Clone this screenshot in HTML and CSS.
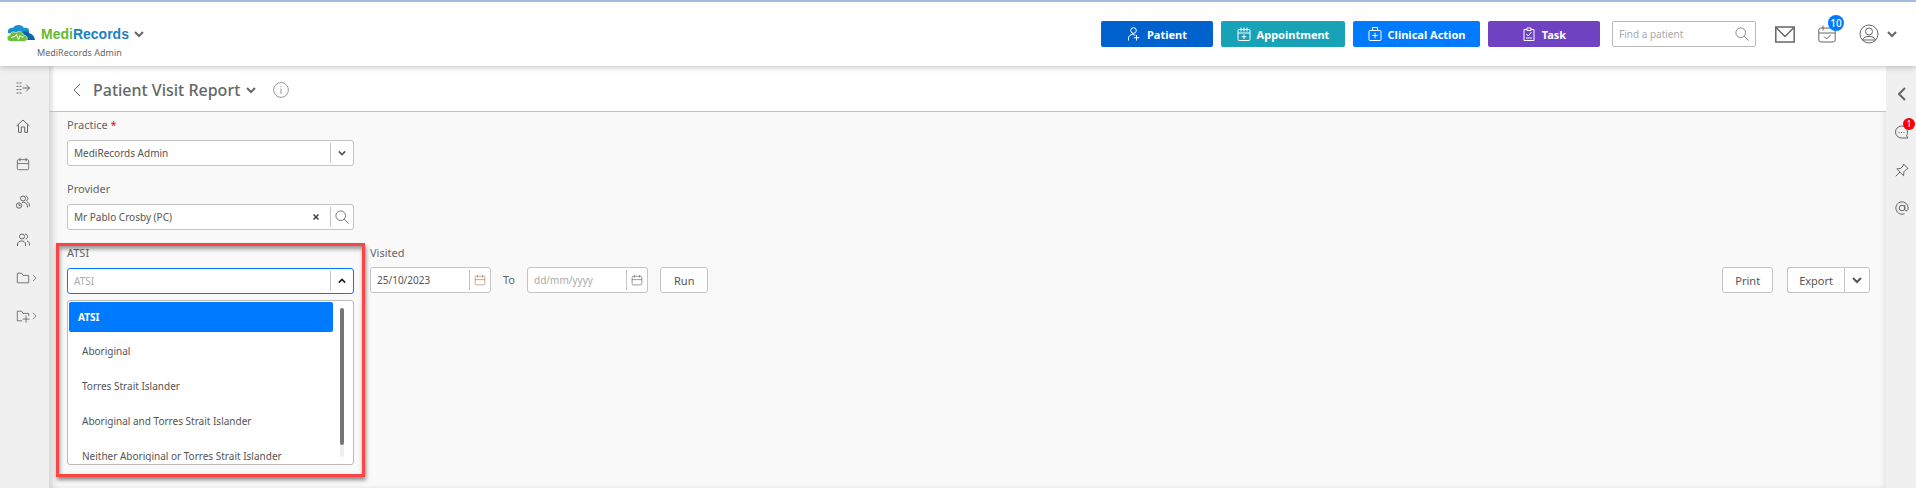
FILE: index.html
```html
<!DOCTYPE html>
<html lang="en">
<head>
<meta charset="utf-8">
<title>Patient Visit Report</title>
<link rel="stylesheet" href="styles.css">
</head>
<body>
<svg class="sprite" aria-hidden="true">
  <symbol id="chev" viewBox="0 0 10 10"><path d="M1 3l4 4 4-4"/></symbol>
  <symbol id="cal" viewBox="0 0 16 16"><rect x="1.500" y="3" width="13" height="11.500" rx="1.500"/><path d="M1.500 7.500h13M4.500 1v4M11.500 1v4"/></symbol>
  <symbol id="glass" viewBox="0 0 16 16"><circle cx="6.500" cy="6.500" r="5.500"/><path d="M10.500 10.500l5 5"/></symbol>
  <symbol id="folder" viewBox="0 0 16 16"><path d="M1.500 13.500v-11h5l1.500 2.500h6.500v8.500z"/></symbol>
</svg>
<header class="top">
  <div class="brand">
    <div class="brand-row">
      <svg class="cloud" viewBox="0 0 28 18" aria-hidden="true">
        <path fill="#1690cf" d="M1 8C0 4 4 2 6 3c2-4 9-4 11 0 4-1 6 2 5 5 4 1 5 5 4 7-7 1-16-5-25-7z"/>
        <path fill="#0b66a8" d="M14 8c3-3 7-2 9 1 3 0 5 4 5 6H17z"/>
        <path fill="#6fbe3c" stroke="#fff" stroke-width=".6" d="M4 16.500c-5 0-5-6-1-6.500 0-3 4-4 6-2 3-3 7-1 7.500 2 5 .5 5 6.500.5 6.500z"/>
        <path fill="none" stroke="#fff" d="M4 12.500l4-1 1.500-2 2 5 1.500-4 1.500 1.500h2"/>
      </svg>
      <span class="wordmark"><span class="green">Medi</span>Records</span>
      <button class="bare" aria-label="Switch practice"><svg class="i10"><use href="#chev"/></svg></button>
    </div>
    <div class="brand-sub">MediRecords Admin</div>
  </div>
  <nav class="actions">
    <button class="act patient"><svg viewBox="0 0 14 14"><circle cx="6.500" cy="3.500" r="2.800"/><path d="M1.500 13.500V11c0-2 2-3.500 4-3.500M5 6.500c1.500 1.500 2.500 1.500 3.500 1.500M9.500 8v5.500M6.800 10.700h5.500"/></svg>Patient</button>
    <button class="act appt"><svg viewBox="0 0 14 14"><rect x="1" y="2.500" width="12" height="11" rx="1"/><path d="M1 6h12M4 .5v4M10 .5v4M7 .5v4M7 7.500v4.500M4.800 9.700h4.500"/></svg>Appointment</button>
    <button class="act clin"><svg viewBox="0 0 14 14"><rect x="1" y="3.500" width="12" height="10" rx="1"/><path d="M4.500 3.500v-3h5v3M7 5.800v5.400M4.300 8.500h5.400"/></svg>Clinical Action</button>
    <button class="act task"><svg viewBox="0 0 14 14"><path d="M5 2.500H2v11h10v-11H9M5 1h4v2.500H5zM4.500 7l1.800 2 3.200-4M4 11h6"/></svg>Task</button>
    <div class="find">
      <input type="text" aria-label="Find a patient" placeholder="Find a patient">
      <svg class="i14"><use href="#glass"/></svg>
    </div>
    <button class="bare mail" aria-label="Messages"><svg viewBox="0 0 20 17"><rect x=".8" y="1" width="18.400" height="15"/><path d="M1 1.500l9 9 9-9"/></svg></button>
    <button class="bare diary" aria-label="Reminders"><svg viewBox="0 0 18 18"><rect x=".8" y="3" width="16.400" height="14" rx="2"/><path d="M1 8h16M5 .5v5M6 11.500l2.500 2.500 4-4"/></svg><span class="badge">10</span></button>
    <button class="bare user" aria-label="Account"><svg class="face" viewBox="0 0 20 20"><circle cx="10" cy="10" r="9"/><circle cx="10" cy="7.500" r="3.500"/><path d="M3.500 16c1-3 3.500-3.500 6.500-3.500s5.500.5 6.500 3.500z"/></svg><svg class="i10"><use href="#chev"/></svg></button>
  </nav>
</header>
<div class="shell">
  <nav class="rail" aria-label="Main">
    <button class="bare" aria-label="Expand menu"><svg class="i14" viewBox="0 0 14 14"><path stroke-dasharray="2 1" d="M.5 2h5M.5 5.300h5M.5 8.600h5M.5 12h5"/><path d="M6.500 7h7M10 3.500L13.500 7 10 10.500"/></svg></button>
    <button class="bare" aria-label="Home"><svg class="i14" viewBox="0 0 14 14"><path d="M.5 7L7 1l6.500 6M2.500 5.500v7.800h2.800V8h3.400v5.300h2.800V5.500"/></svg></button>
    <button class="bare" aria-label="Calendar"><svg class="i14"><use href="#cal"/></svg></button>
    <button class="bare" aria-label="Waiting room"><svg class="i14" viewBox="0 0 14 14"><circle cx="7" cy="3.500" r="2.500"/><path d="M9.500 1c3 0 3 4.500.5 4.800M6 7.500c3-1 5.500 1 5.500 5M11 7c2 .6 2.500 2 2.500 4.500"/><circle cx="3" cy="10.500" r="2.700"/><path d="M3 9v1.500h1.500"/></svg></button>
    <button class="bare" aria-label="Patients"><svg class="i14" viewBox="0 0 14 14"><circle cx="6" cy="3.500" r="2.500"/><path d="M9 1c3.300 0 3.300 4.500.5 5M1.500 13V11c0-4 8-4 8 0v2M11 8c2 .5 2.500 2 2.500 4.500"/></svg></button>
    <button class="bare" aria-label="Files"><svg class="i14"><use href="#folder"/></svg><svg class="more" viewBox="0 0 6 10"><path d="M1 1l4 4-4 4"/></svg></button>
    <button class="bare" aria-label="Add files"><svg class="i14" viewBox="0 0 16 16"><path d="M7 13.500H1.500v-11h5L8 5h6.500v3M11.500 7.500v8M7.500 11.500h8"/></svg><svg class="more" viewBox="0 0 6 10"><path d="M1 1l4 4-4 4"/></svg></button>
  </nav>
  <main class="page">
    <div class="titlebar">
      <button class="bare" aria-label="Back"><svg class="back" viewBox="0 0 8 14"><path d="M7 1L1 7l6 6"/></svg></button>
      <h1>Patient Visit Report</h1>
      <button class="bare" aria-label="Choose report"><svg class="i10"><use href="#chev"/></svg></button>
      <button class="bare info" aria-label="Information"><svg viewBox="0 0 16 16"><circle cx="8" cy="8" r="7.400"/><path d="M8 6.500V12M8 4v1.300"/></svg></button>
    </div>
    <form class="form">
      <div class="field">
        <label for="practice">Practice <span class="req">*</span></label>
        <div class="box">
          <select id="practice"><option>MediRecords Admin</option></select>
          <span class="end"><svg class="i8"><use href="#chev"/></svg></span>
        </div>
      </div>
      <div class="field">
        <label for="provider">Provider</label>
        <div class="box">
          <input id="provider" type="text" value="Mr Pablo Crosby (PC)">
          <button type="button" class="bare clear" aria-label="Clear"><svg viewBox="0 0 8 8"><path d="M1.500 1.500l5 5M6.500 1.500l-5 5"/></svg></button>
          <button type="button" class="bare end" aria-label="Search"><svg class="i14"><use href="#glass"/></svg></button>
        </div>
      </div>
      <div class="line">
        <div class="field atsi">
          <label for="atsi">ATSI</label>
          <div class="box open">
            <input id="atsi" type="text" role="combobox" aria-expanded="true" aria-controls="atsi-list" placeholder="ATSI">
            <button type="button" class="bare end up" aria-label="Close list"><svg class="i8"><use href="#chev"/></svg></button>
          </div>
          <div class="menu">
            <ul id="atsi-list" role="listbox" aria-label="ATSI">
              <li class="on" role="option" aria-selected="true">ATSI</li>
              <li role="option">Aboriginal</li>
              <li role="option">Torres Strait Islander</li>
              <li role="option">Aboriginal and Torres Strait Islander</li>
              <li role="option">Neither Aboriginal or Torres Strait Islander</li>
            </ul>
            <div class="track"><div class="thumb"></div></div>
          </div>
          <div class="mark"></div>
        </div>
        <div class="visited">
          <label for="from">Visited</label>
          <div class="range">
            <div class="box date"><input id="from" type="text" value="25/10/2023"><button type="button" class="bare end" aria-label="Pick start date"><svg class="i12 warm"><use href="#cal"/></svg></button></div>
            <label class="to" for="until">To</label>
            <div class="box date"><input id="until" type="text" placeholder="dd/mm/yyyy"><button type="button" class="bare end" aria-label="Pick end date"><svg class="i12"><use href="#cal"/></svg></button></div>
            <button type="button" class="btn run">Run</button>
          </div>
        </div>
        <div class="outputs">
          <button type="button" class="btn">Print</button>
          <div class="split"><button type="button" class="btn">Export</button><button type="button" class="btn drop" aria-label="Export options"><svg class="i10"><use href="#chev"/></svg></button></div>
        </div>
      </div>
    </form>
  </main>
  <aside class="side">
    <button class="bare" aria-label="Open panel"><svg class="back thick" viewBox="0 0 8 14"><path d="M7 1L1 7l6 6"/></svg></button>
    <button class="bare chat" aria-label="Chat"><svg class="i14" viewBox="0 0 14 14"><path d="M13 13H6.500a6 6 0 1 1 6-6c0 2-.5 3-1 4z"/><path stroke-dasharray="1 1.500" d="M3.500 7.500h7"/></svg><span class="badge red">1</span></button>
    <button class="bare" aria-label="Pinned"><svg class="i14" viewBox="0 0 14 14"><path d="M8.500 1l4.500 4.500-1.500.7-2.500 2.500-.5 4L1.800 6l4-.7L8 3zM5 9L.8 13.200"/></svg></button>
    <button class="bare" aria-label="Mentions"><svg class="i14" viewBox="0 0 14 14"><circle cx="7" cy="7" r="2.800"/><path d="M9.800 4v4.500c0 2 3.400 2 3.400-1.500A6.200 6.200 0 1 0 9.500 12.700"/></svg></button>
  </aside>
</div>
</body>
</html>
```
FILE: styles.css
```css
* { box-sizing: border-box; }
body {
  margin: 0;
  min-height: 100vh;
  display: flex;
  flex-direction: column;
  font-family: "Noto Sans", "Open Sans", sans-serif;
  font-size: 10px;
  color: #555;
  background: #f9f9f9;
}
svg { display: block; flex: none; fill: none; stroke: currentColor; stroke-width: 1; }
.sprite { position: absolute; width: 0; height: 0; }
.i8 { width: 8px; height: 8px; stroke-width: 2; }
.i10 { width: 10px; height: 10px; stroke-width: 2; }
.i12 { width: 12px; height: 12px; }
.i14 { width: 14px; height: 14px; }
button, input, select { font: inherit; color: inherit; }
.bare {
  display: flex;
  align-items: center;
  justify-content: center;
  padding: 0;
  border: 0;
  background: none;
  color: #666;
}

.top {
  position: relative;
  z-index: 2;
  display: flex;
  justify-content: space-between;
  align-items: flex-start;
  height: 66px;
  background: #fff;
  border-top: 2px solid #a3bbdc;
  box-shadow: 0 1px 6px rgba(0, 0, 0, .25);
}
.brand { padding: 22px 0 0 7px; }
.brand-row { display: flex; align-items: center; height: 20px; }
.cloud { width: 28px; height: 18px; stroke: none; margin-right: 6px; }
.wordmark {
  font: bold 14px/20px "Liberation Sans", sans-serif;
  color: #1b7fc0;
  margin-right: 5px;
}
.green { color: #67b82f; }
.brand-sub { margin-left: 30px; padding-top: 2px; font-size: 9px; line-height: 14px; color: #666; }

.actions { display: flex; align-items: center; gap: 8px; padding: 19px 19px 0 0; }
.act {
  display: flex;
  align-items: center;
  justify-content: center;
  gap: 6px;
  height: 26px;
  width: 112px;
  padding: 0;
  border: 0;
  border-radius: 2px;
  color: #fff;
  font-weight: bold;
  font-size: 11px;
}
.act svg { width: 14px; height: 14px; }
.patient { background: #0062cc; }
.appt { width: 124px; background: #17a2b8; }
.clin { width: 127px; background: #007bff; }
.task { background: #6f42c1; }
.find {
  display: flex;
  align-items: center;
  width: 144px;
  height: 26px;
  margin-left: 4px;
  padding: 0 6px;
  border: 1px solid #bbb;
  border-radius: 2px;
  color: #777;
}
.find input, .box input, .box select {
  flex: 1;
  min-width: 0;
  height: 100%;
  padding: 0;
  border: 0;
  outline: 0;
  background: none;
  appearance: none;
}
::placeholder { color: #aaa; opacity: 1; }
.mail { margin-left: 11px; }
.mail svg { width: 20px; height: 17px; stroke-width: 1.5; }
.diary { position: relative; margin-left: 15px; }
.diary svg { width: 18px; height: 18px; }
.user { gap: 8px; margin-left: 15px; }
.face { width: 20px; height: 20px; }
.badge {
  position: absolute;
  top: -10px;
  right: -8px;
  width: 16px;
  height: 16px;
  border-radius: 8px;
  background: #007bff;
  color: #fff;
  font-size: 10px;
  font-weight: 500;
  line-height: 16px;
  text-align: center;
}

.shell { flex: 1; display: flex; }
.rail {
  width: 49px;
  flex: none;
  padding-top: 12px;
  background: #f0f0f0;
}
.rail .bare { position: relative; width: 45px; height: 20px; margin-bottom: 18px; color: #666; }
.more { position: absolute; right: 8px; width: 5px; height: 8px; }
.page {
  flex: 1;
  min-width: 0;
  box-shadow: inset 6px 0 6px -2px #d4d4d4, inset -4px 0 5px -2px #e4e4e4;
}
.titlebar {
  display: flex;
  align-items: center;
  height: 46px;
  padding: 2px 0 0 24px;
  border-bottom: 1px solid #c4c4c4;
  background: linear-gradient(90deg, #dcdcdc, #fff 6px);
}
.back { width: 8px; height: 14px; }
.thick { stroke-width: 2; }
h1 { margin: 0 6px 0 12px; font-size: 16px; font-weight: 500; line-height: 24px; color: #666; }
.info { margin-left: 17px; color: #999; }
.info svg { width: 16px; height: 16px; }

.form { display: flex; flex-direction: column; gap: 14px; padding: 4px 16px 0 18px; }
.field { width: 287px; flex: none; display: flex; flex-direction: column; gap: 6px; }
.field label, .visited label { font-size: 11px; line-height: 18px; color: #666; }
.req { color: red; }
.box {
  position: relative;
  display: flex;
  align-items: center;
  height: 26px;
  padding-left: 6px;
  border: 1px solid #c4c4c4;
  border-radius: 3px;
  background: #fff;
}
.end {
  display: flex;
  align-items: center;
  justify-content: center;
  width: 23px;
  height: 20px;
  border-left: 1px solid #c4c4c4;
}
.clear { margin-right: 10px; color: #444; }
.clear svg { width: 8px; height: 8px; stroke-width: 1.5; }
.up svg { transform: rotate(180deg); color: #222; }
.open { border-color: #007bff; }
.line { display: flex; align-items: flex-start; }
.atsi { position: relative; }
.menu {
  position: absolute;
  z-index: 1;
  top: 56px;
  left: 0;
  right: 0;
  display: flex;
  height: 165px;
  padding: 1px;
  border: 1px solid #bbb;
  border-radius: 3px;
  background: #fff;
}
.menu ul { flex: 1; height: 160px; margin: 0; padding: 0; list-style: none; overflow: hidden; }
.menu li { height: 35px; padding-left: 13px; line-height: 35px; }
.menu .on {
  height: 30px;
  margin-bottom: 2px;
  padding-left: 9px;
  border-radius: 2px;
  background: #007bff;
  color: #fff;
  font-weight: bold;
  line-height: 30px;
}
.track { width: 4px; height: 149px; margin: 6px 8px 0 7px; border-radius: 2px; background: #eee; }
.thumb { height: 137px; border-radius: 2px; background: #777; }
.mark {
  position: absolute;
  z-index: 2;
  top: -1px;
  left: -11px;
  width: 309px;
  height: 234px;
  border: 3px solid #fb4444;
  box-shadow: 1px 3px 4px rgba(0, 0, 0, .45), inset 1px 3px 4px rgba(0, 0, 0, .4);
  pointer-events: none;
}
.visited { display: flex; flex-direction: column; gap: 5px; margin-left: 16px; }
.range { display: flex; align-items: center; gap: 12px; }
.date { width: 121px; }
.date .end { width: 21px; color: #777; }
.date .warm { color: #b98a66; }
.btn {
  height: 26px;
  padding: 0 12px;
  border: 1px solid #c4c4c4;
  border-radius: 3px;
  background: #fff;
  font-size: 11px;
}
.run { padding: 0 13px; }
.outputs { display: flex; gap: 14px; margin: 23px 0 0 auto; }
.split { display: flex; }
.split .btn:first-child { padding: 0 11px; border-right: 0; border-radius: 3px 0 0 3px; }
.split .drop { padding: 0 7px; border-radius: 0 3px 3px 0; }

.side {
  width: 30px;
  flex: none;
  padding-top: 18px;
  background: #f0f0f0;
}
.side .bare { position: relative; width: 32px; height: 20px; margin-bottom: 18px; }
.side .red { top: -4px; right: 3px; width: 12px; height: 12px; line-height: 12px; font-size: 8px; background: red; }
```
